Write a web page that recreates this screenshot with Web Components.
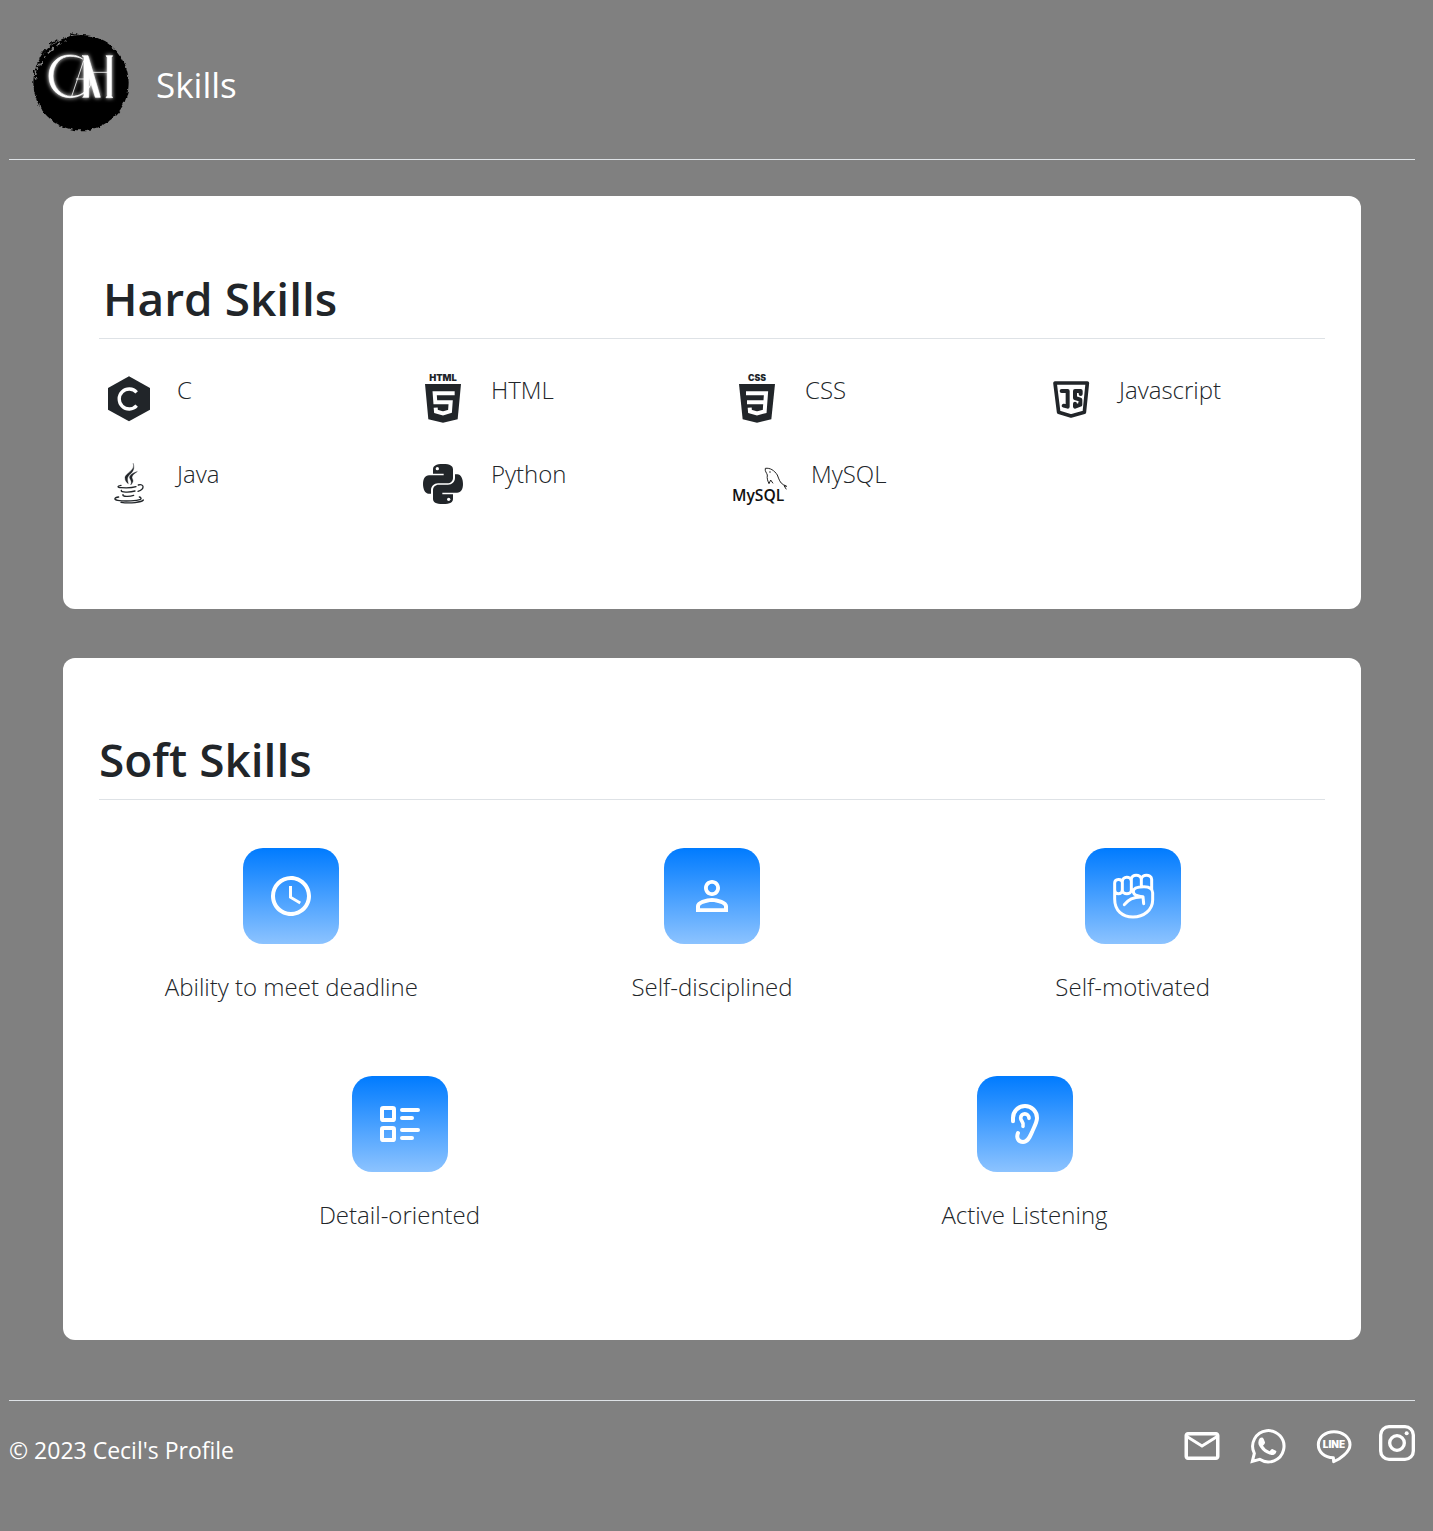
<!DOCTYPE html>
<html lang="en">
<head>
<meta charset="utf-8">
<meta name="viewport" content="width=device-width, initial-scale=1">
<title>Cecil's Profile</title>
<style>
  body { margin: 0; background: #808080; color: #212529; font-family: "Open Sans", "Noto Sans", sans-serif; font-size: 24px; line-height: 36px; }
</style>
</head>
<body>
<profile-page></profile-page>

<template id="page-tpl">
  <style>
    :host { display: block; padding: 0 18px 0 9px; }
    main { display: flex; flex-direction: column; gap: 49px; padding: 36px 54px 60px; }
  </style>
  <page-header>Skills</page-header>
  <main>
    <skill-card heading="Hard Skills" class="hard">
      <skill-grid columns="4">
        <hard-skill label="C"><svg slot="icon" width="48" height="48" viewBox="45 345 144 144"><path d="M117 349 180 384V449L117 484 54 449V384Z" fill="#212529"/><path d="M140 397A30 30 0 1 0 140 437" fill="none" stroke="#fff" stroke-width="10"/></svg></hard-skill>
        <hard-skill label="HTML"><svg slot="icon" width="48" height="48" viewBox="27 45 144 144"><text x="99" y="64" text-anchor="middle" font-family="Inter, sans-serif" font-size="28" font-weight="900" fill="#212529">HTML</text><path d="M45 72H153L143 178 99 188 55 178Z" fill="#212529"/><path d="M134 100H74L76 127H122L120 154 99 160 78 154 77 143" fill="none" stroke="#fff" stroke-width="12"/></svg></hard-skill>
        <hard-skill label="CSS"><svg slot="icon" width="48" height="48" viewBox="39 45 144 144"><text x="111" y="64" text-anchor="middle" font-family="Inter, sans-serif" font-size="26" font-weight="900" fill="#212529">CSS</text><path d="M57 72H165L154 178 111 188 68 178Z" fill="#212529"/><path d="M78 100H138L134 154 111 160 90 154 89 143M81 127H134" fill="none" stroke="#fff" stroke-width="12"/></svg></hard-skill>
        <hard-skill label="Javascript"><svg slot="icon" width="48" height="48" viewBox="21 30 144 144" fill="none" stroke="#212529" stroke-width="11" stroke-linejoin="round"><path d="M45 54H142L133 142 93 153 56 142Z"/><path d="M65 78H83V125L71 122M122 87V78H105V99L121 104V119L105 125V116" stroke-width="12" stroke-linecap="round"/></svg></hard-skill>
        <hard-skill label="Java"><svg slot="icon" width="48" height="48" viewBox="45 597 144 144" fill="none" stroke="#212529" stroke-width="4" stroke-linecap="round"><path d="M130 611C137 631 105 640 105 653C105 661 109 667 115 671C112 659 110 653 120 643C131 633 134 624 130 611Z" fill="#212529" stroke-width="1"/><path d="M141 635C126 639 117 647 119 654C121 661 127 664 122 675C135 662 126 659 126 652C126 646 133 641 141 635Z" fill="#212529" stroke-width="1"/><path d="M93 676C80 679 82 683 94 683C112 684 129 683 138 680M145 675C163 670 165 688 144 694M94 691C91 697 118 698 135 693M99 704C96 710 118 711 131 706M86 711C72 713 71 719 83 721C107 725 141 722 151 718C156 715 151 711 148 711M93 727C121 731 155 727 160 720"/></svg></hard-skill>
        <hard-skill label="Python"><svg slot="icon" width="48" height="48" viewBox="27 297 144 144"><defs><path id="snake" d="M99 312C77 312 69 318 69 328V341H101V346H57C45 346 39 357 39 372S45 401 56 401H63V391C63 379 72 370 84 370H112C122 370 129 363 129 354V328C129 318 121 312 99 312Z"/></defs><g fill="#212529"><use href="#snake"/><use href="#snake" transform="rotate(180 99 372)"/></g><circle cx="82" cy="326" r="5" fill="#fff"/><circle cx="116" cy="418" r="5" fill="#fff"/></svg></hard-skill>
        <hard-skill label="MySQL"><svg slot="icon" width="54" height="48" viewBox="39 297 162 144"><text x="36" y="424" font-family="Open Sans" font-size="47" font-weight="600" fill="#111">MySQL</text><path d="M136 325C150 323 163 331 172 345C177 358 180 369 190 374L200 379L192 377L199 388M136 325C134 334 140 338 142 345C140 356 144 364 147 371L152 360L159 370" fill="none" stroke="#222" stroke-width="3"/><circle cx="150" cy="336" r="2"/></svg></hard-skill>
      </skill-grid>
    </skill-card>
    <skill-card heading="Soft Skills" class="soft">
      <skill-grid columns="3">
        <soft-skill label="Ability to meet deadline"><svg slot="icon" viewBox="0 0 24 24" fill="#fff"><path d="M12 20c4.4 0 8-3.6 8-8s-3.6-8-8-8-8 3.6-8 8 3.6 8 8 8m0-18c5.5 0 10 4.5 10 10s-4.5 10-10 10C6.47 22 2 17.5 2 12A10 10 0 0 1 12 2m.5 5v5.25l4.5 2.67-.75 1.23L11 13V7z"/></svg></soft-skill>
        <soft-skill label="Self-disciplined"><svg slot="icon" viewBox="0 0 24 24" fill="#fff"><path fill-rule="evenodd" d="M12 5.9a2.1 2.1 0 1 1 0 4.2 2.1 2.1 0 0 1 0-4.2m0 9.1c2.7 0 5.8 1.29 6 2v1.1H6V17c.2-.72 3.3-2 6-2m0-11C9.79 4 8 5.79 8 8s1.79 4 4 4 4-1.79 4-4-1.79-4-4-4m0 9c-2.67 0-8 1.34-8 4v3h16v-3c0-2.66-5.33-4-8-4"/></svg></soft-skill>
        <soft-skill label="Self-motivated"><svg slot="icon" viewBox="96 96 144 144" fill="none" stroke="#fff" stroke-width="9" stroke-linecap="round" stroke-linejoin="round"><path d="M113 154V129C113 115 135 115 136 127V150C136 165 113 165 113 150V177C113 212 136 231 168 231S227 210 227 180V158C227 146 216 140 201 140C184 140 169 142 169 154C169 165 178 167 198 170L200 191M136 125C136 108 162 108 163 123V150C163 165 136 165 136 150M163 142V118C163 102 192 102 193 118V140M193 118C194 102 223 102 224 118V147M142 194C153 179 173 170 196 171"/></svg></soft-skill>
      </skill-grid>
      <skill-grid columns="2">
        <soft-skill label="Detail-oriented"><svg slot="icon" viewBox="96 96 144 144" fill="none" stroke="#fff" stroke-width="12" stroke-linecap="round"><rect x="114" y="120" width="36" height="36" rx="4"/><rect x="114" y="180" width="36" height="36" rx="4"/><path d="M174 126H222M174 150H204M174 186H222M174 210H204"/></svg></soft-skill>
        <soft-skill label="Active Listening"><svg slot="icon" viewBox="96 96 144 144" fill="none" stroke="#fff" stroke-width="12" stroke-linecap="round"><path d="M132 160V150A36 36 0 0 1 204 150C204 162 196 176 190 190C183 205 178 222 162 222C148 222 141 209 147 195"/><path d="M180 151C180 133 155 134 155 150C155 161 166 161 162 175" stroke-width="11"/></svg></soft-skill>
      </skill-grid>
    </skill-card>
  </main>
  <page-footer>© 2023 Cecil's Profile</page-footer>
</template>

<template id="header-tpl">
  <style>
    :host { display: flex; align-items: center; gap: 24px; padding: 32px 21px 25px; border-bottom: 1px solid #dee2e6; color: #fff; }
    svg { display: block; flex: none; }
    h1 { margin: 0; padding-top: 4px; font-size: 35px; line-height: 54px; font-weight: 400; }
  </style>
  <svg width="102" height="102" viewBox="30 36 306 306" role="img" aria-label="Logo">
    <defs>
      <filter id="rough" x="-10%" y="-10%" width="120%" height="120%"><feTurbulence type="fractalNoise" baseFrequency=".07" numOctaves="3" seed="4"/><feDisplacementMap in="SourceGraphic" scale="12" xChannelSelector="R" yChannelSelector="G"/></filter>
      <filter id="glow" x="-20%" y="-20%" width="140%" height="140%"><feGaussianBlur stdDeviation="7"/></filter>
      <g id="mono" stroke="#fff" fill="none">
        <path d="M188 117C176 107 162 105 148 105C113 105 87 132 87 168C87 205 114 233 150 233C177 233 200 219 211 196C198 218 177 229 155 229C123 229 99 202 99 168C99 134 121 109 150 109C165 109 178 112 188 117Z" fill="#fff" stroke-width="2"/>
        <path d="M154 232 191 122M168 177H208M218 157H264M211 196 214 176" stroke-width="2.5"/>
        <path d="M186 107H204L241 232H226L206 166V232H188L192 228V112Z" fill="#fff" stroke-width="2"/>
        <path d="M258 107H278L274 113V227L278 233H258L262 227V113Z" fill="#fff" stroke-width="2"/>
      </g>
    </defs>
    <g filter="url(#rough)"><circle cx="183" cy="188" r="143"/><path d="M62 136C77 99 104 76 147 58" fill="none" stroke="#808080" stroke-width="5" stroke-dasharray="16 9 5 12 24 11"/><path d="M46 176C48 154 52 144 58 131M287 292C302 280 313 262 317 249M224 328 260 317" fill="none" stroke="#808080" stroke-width="6" stroke-dasharray="5 7 10 5"/><path d="M40 150 44 165M66 103 78 88M90 75 112 59M151 43 172 42" stroke="#000" stroke-width="4"/></g>
    <use href="#mono" filter="url(#glow)"/><use href="#mono"/>
  </svg>
  <h1><slot></slot></h1>
</template>

<template id="card-tpl">
  <style>
    :host { display: block; background: #fff; border-radius: 12px; padding: 73px 36px 102px; }
    h2 { margin: 0; padding: 0 0 11px; border-bottom: 1px solid #dee2e6; font-size: 46px; line-height: 58px; font-weight: 600; }
    .body { display: flex; flex-direction: column; gap: 71px; padding-top: 36px; }
    :host(.hard) h2 { padding-left: 4px; }
    :host(.soft) { padding-top: 72px; padding-bottom: 107px; }
    :host(.soft) .body { padding-top: 48px; }
  </style>
  <h2></h2>
  <div class="body"><slot></slot></div>
</template>

<template id="grid-tpl">
  <style>
    :host { display: grid; }
    :host([columns="4"]) { grid-template-columns: repeat(4, 1fr); gap: 36px 30px; }
    :host([columns="3"]) { grid-template-columns: repeat(3, 1fr); gap: 36px; }
    :host([columns="2"]) { grid-template-columns: repeat(2, 1fr); gap: 24px; }
  </style>
  <slot></slot>
</template>

<template id="hard-tpl">
  <style>
    :host { display: flex; align-items: flex-start; gap: 24px; padding-left: 6px; font-weight: 350; line-height: 30px; }
    ::slotted(svg) { display: block; flex: none; overflow: visible; }
  </style>
  <slot name="icon"></slot><span></span>
</template>

<template id="soft-tpl">
  <style>
    :host { display: flex; flex-direction: column; align-items: center; gap: 25px; font-weight: 350; line-height: 36px; }
    .tile { display: flex; width: 96px; height: 96px; border-radius: 20px; background: linear-gradient(#007bff, #8cc3ff); }
    ::slotted(svg) { width: 48px; height: 48px; margin: auto; }
  </style>
  <div class="tile"><slot name="icon"></slot></div><span></span>
</template>

<template id="footer-tpl">
  <style>
    :host { display: flex; justify-content: space-between; align-items: flex-start; border-top: 1px solid #dee2e6; padding: 24px 0 64px; color: #fff; }
    p { margin: 0; padding-top: 7px; font-size: 23px; line-height: 36px; }
    nav { display: flex; gap: 24px; align-items: flex-start; }
    a { display: block; color: #fff; }
    svg { display: block; }
  </style>
  <p><slot></slot></p>
  <nav aria-label="Contact">
    <a href="#mail" aria-label="Email"><svg width="42" height="42" viewBox="0 0 24 24" fill="#fff"><path d="M22 6c0-1.1-.9-2-2-2H4c-1.1 0-2 .9-2 2v12c0 1.1.9 2 2 2h16c1.1 0 2-.9 2-2zm-2 0-8 5-8-5zm0 12H4V8l8 5 8-5z"/></svg></a>
    <a href="#whatsapp" aria-label="WhatsApp"><svg width="42" height="42" viewBox="233 45 126 126"><path d="M249 154 255 130A47 47 0 1 1 271 148Z" fill="none" stroke="#fff" stroke-width="9"/><path d="M272 84Q280 80 283 87L287 97Q288 101 281 107Q288 119 301 124Q306 116 309 117L321 123Q322 130 314 134Q306 138 292 130Q275 120 268 104Q265 92 272 84Z" fill="#fff"/></svg></a>
    <a href="#line" aria-label="Line"><svg width="42" height="42" viewBox="429 45 126 126"><path d="M490 143C463 142 445 126 445 104C445 82 466 65 492 65S540 82 540 104C540 126 508 149 491 155Z" fill="none" stroke="#fff" stroke-width="9" stroke-linejoin="round"/><text x="492" y="115" text-anchor="middle" font-family="Inter, sans-serif" font-size="30" font-weight="900" fill="#fff">LINE</text></svg></a>
    <a href="#instagram" aria-label="Instagram"><svg width="36" height="36" viewBox="627 45 108 108" fill="none" stroke="#fff" stroke-width="10"><rect x="632" y="50" width="98" height="98" rx="25"/><circle cx="681" cy="99" r="22"/><circle cx="710" cy="70" r="6" fill="#fff" stroke="none"/></svg></a>
  </nav>
</template>

<script>
  class Base extends HTMLElement {
    constructor() {
      super();
      const tpl = document.getElementById(this.constructor.template);
      this.attachShadow({ mode: 'open' }).append(tpl.content.cloneNode(true));
    }
  }
  class Labelled extends Base {
    connectedCallback() {
      this.shadowRoot.querySelector('span').textContent = this.getAttribute('label');
    }
  }
  customElements.define('page-header', class extends Base { static template = 'header-tpl'; });
  customElements.define('page-footer', class extends Base { static template = 'footer-tpl'; });
  customElements.define('skill-grid', class extends Base { static template = 'grid-tpl'; });
  customElements.define('hard-skill', class extends Labelled { static template = 'hard-tpl'; });
  customElements.define('soft-skill', class extends Labelled { static template = 'soft-tpl'; });
  customElements.define('skill-card', class extends Base {
    static template = 'card-tpl';
    connectedCallback() { this.shadowRoot.querySelector('h2').textContent = this.getAttribute('heading'); }
  });
  customElements.define('profile-page', class extends Base { static template = 'page-tpl'; });
</script>
</body>
</html>
